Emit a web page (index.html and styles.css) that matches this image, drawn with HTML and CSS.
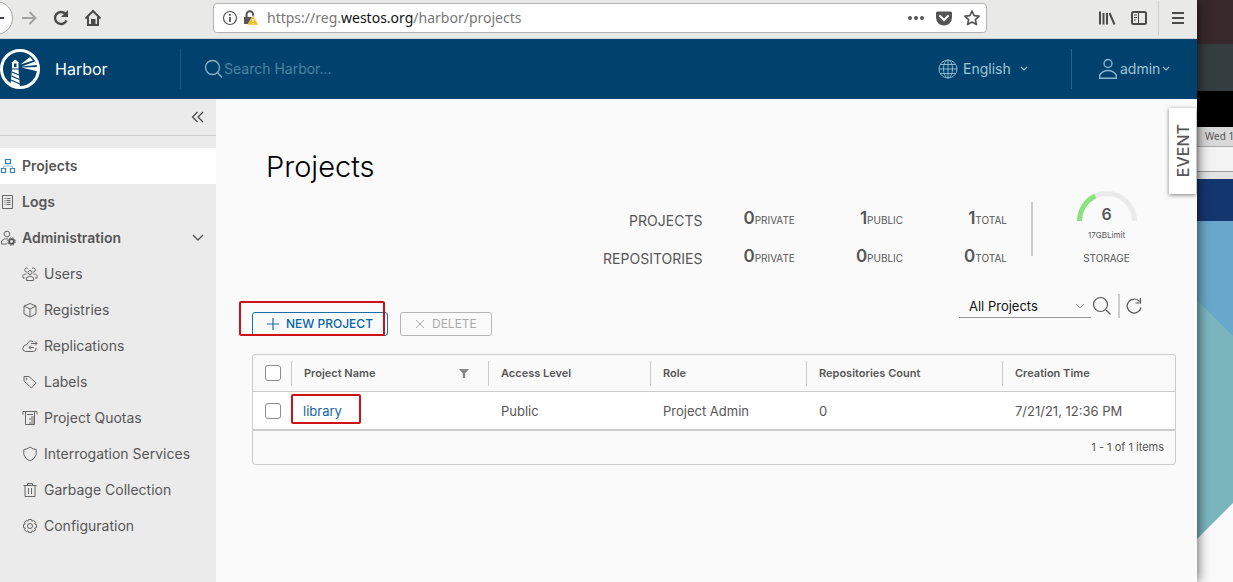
FILE: index.html
```html
<!DOCTYPE html>
<html lang="en">
<head>
<meta charset="utf-8">
<title>Harbor</title>
<link rel="stylesheet" href="styles.css">
</head>
<body>
<div class="browser">
  <div class="chrome">
    <button class="back" aria-label="Back"><svg width="20" height="34" viewBox="0 0 20 34"><circle cx="-4" cy="17" r="16.5" fill="#fcfcfc" stroke="#a5a5a4"/><path d="M0 17h4" stroke="#444" stroke-width="2"/></svg></button>
    <div class="nav">
      <button aria-label="Forward"><svg width="18" height="18" viewBox="0 0 18 18" fill="none" stroke="#a3a3a2" stroke-width="2"><path d="M2 9h14M9.500 3l6 6-6 6"/></svg></button>
      <button aria-label="Reload"><svg width="18" height="18" viewBox="0 0 18 18" fill="none" stroke="#4a4a4a" stroke-width="2.400"><path d="M14.500 11.500A6 6 0 1 1 13.500 5"/><path d="M16 1v7H9z" fill="#4a4a4a" stroke="none"/></svg></button>
      <button aria-label="Home"><svg width="18" height="18" viewBox="0 0 18 18" fill="none" stroke="#4a4a4a" stroke-width="2"><path d="M1.500 9.500L9 2l7.500 7.500M4 8v8h10V8"/><path d="M8 16v-5h2.500v5" fill="#4a4a4a"/></svg></button>
    </div>
    <div class="address">
      <svg width="16" height="16" viewBox="0 0 16 16" fill="none" stroke="#555"><circle cx="8" cy="8" r="6.500" stroke-width="1.200"/><path d="M8 7v5M8 4v1.700" stroke-width="1.800"/></svg>
      <svg class="lock" width="18" height="18" viewBox="0 0 18 18"><path d="M4.500 9V5.500a3.300 3.300 0 0 1 6.600 0V9" fill="none" stroke="#555" stroke-width="2"/><path d="M2 8h10v7H2z" fill="#555"/><path d="M11 6.500l5.500 9.500H5.500z" fill="#fbb717" stroke="#fff" stroke-width=".5"/><path d="M11 10v3M11 14v1" stroke="#fff" stroke-width="1.300"/></svg>
      <div class="url">https://reg.<b>westos.org</b>/harbor/projects</div>
      <button aria-label="Page actions"><svg width="18" height="18" viewBox="0 0 18 18" fill="#555"><circle cx="3" cy="9" r="2"/><circle cx="9" cy="9" r="2"/><circle cx="15" cy="9" r="2"/></svg></button>
      <button aria-label="Pocket"><svg width="18" height="18" viewBox="0 0 18 18"><path d="M2.500 2.500h13q1.500 0 1.500 1.500v4.500a8 8 0 0 1-16 0V4q0-1.500 1.500-1.500z" fill="#555"/><path d="M5 7l4 4 4-4" fill="none" stroke="#fff" stroke-width="2" stroke-linecap="round"/></svg></button>
      <button aria-label="Bookmark"><svg width="18" height="18" viewBox="0 0 18 18" fill="none" stroke="#555" stroke-width="1.700" stroke-linejoin="round"><path d="M9 2l2.100 4.600 5 .6-3.700 3.400 1 5L9 13.100l-4.400 2.500 1-5L1.900 7.200l5-.6z"/></svg></button>
    </div>
    <div class="tools">
      <button aria-label="Library"><svg width="18" height="18" viewBox="0 0 18 18" fill="none" stroke="#4a4a4a" stroke-width="2"><path d="M2 2.500v13M5.500 4v11.500M9 4v11.500M11.500 4l5 11.500"/></svg></button>
      <button aria-label="Sidebars"><svg width="18" height="18" viewBox="0 0 18 18" fill="none" stroke="#4a4a4a"><rect x="2" y="3" width="14" height="12" rx="1.500" stroke-width="2"/><path d="M8.500 3v12M4 6h3M4 8.500h3M4 11h2"/></svg></button>
      <button class="burger" aria-label="Menu"><svg width="18" height="18" viewBox="0 0 18 18" stroke="#4a4a4a" stroke-width="2"><path d="M3 4h12M3 9h12M3 14h12"/></svg></button>
    </div>
  </div>

  <header class="header">
    <a class="brand" href="#">
      <svg width="40" height="40" viewBox="0 0 40 40"><circle cx="20" cy="20" r="18.500" fill="none" stroke="#fff" stroke-width="3"/><path d="M15.300 10.500l4 3.500h-.8v5.500H12V14h-.8zM12 20.500h6.500l1.500 18-9.500-3zM20.500 15.500L30 8l3 3.500zM21.500 17.500l13.500-5 2 3.500zM21.500 18.500L38 18v4.500z" fill="#fff"/><path d="M14 14.500h2.500v3.500H14z" fill="#00426d"/><path d="M12 23l7 3M11.500 27l8 3.500M11 31l9 4" fill="none" stroke="#00426d" stroke-width="1.300"/></svg>
      <span>Harbor</span>
    </a>
    <div class="search">
      <svg width="20" height="20" viewBox="0 0 20 20" fill="none" stroke="#8fb3cb" stroke-width="1.300"><circle cx="8.500" cy="8.500" r="7"/><path d="M13.500 13.500l4.500 5"/></svg>
      <input type="text" placeholder="Search Harbor..." aria-label="Search Harbor">
    </div>
    <button class="lang">
      <svg width="20" height="20" viewBox="0 0 20 20" fill="none" stroke="#8bb5cc"><circle cx="10" cy="10" r="9"/><ellipse cx="10" cy="10" rx="4.500" ry="9"/><path d="M10 1v18M1 10h18M2.500 5.500h15M2.500 14.500h15"/></svg>
      <span>English</span>
      <svg width="8" height="6" viewBox="0 0 8 6" fill="none" stroke="#9cc0d4" stroke-width="1.200"><path d="M1 1l3 3 3-3"/></svg>
    </button>
    <button class="user">
      <svg width="20" height="22" viewBox="0 0 20 22" fill="none" stroke="#8bb5cc" stroke-width="1.400"><circle cx="10" cy="5.500" r="4"/><path d="M1.700 20.300V17q3-4.500 8.300-4.500t8.300 4.500v3.300z"/></svg>
      <span>admin</span>
      <svg width="8" height="6" viewBox="0 0 8 6" fill="none" stroke="#9cc0d4" stroke-width="1.200"><path d="M1 1l3 3 3-3"/></svg>
    </button>
  </header>

  <div class="body">
    <nav class="sidebar">
      <button class="collapse" aria-label="Collapse"><svg width="14" height="12" viewBox="0 0 14 12" fill="none" stroke="#444" stroke-width="1.200"><path d="M6.500 1l-5 5 5 5M12 1L7 6l5 5"/></svg></button>
      <a class="item top active" href="#"><svg width="16" height="16" viewBox="0 0 16 16" fill="none" stroke="#2f7fb8" stroke-width="1.200"><path d="M5.500 1.500h5v4h-5zM1.500 10.500h4v4h-4zM10.500 10.500h4v4h-4z"/><path d="M8 5.500V8M3.500 10.500V8h9v2.500" stroke="#9cc0dc" stroke-width="1"/></svg>Projects</a>
      <a class="item top" href="#"><svg width="16" height="16" viewBox="0 0 16 16" fill="none" stroke="#666"><path d="M2.500 1.500h10v13h-10zM4.500 4.500h1M6.500 4.500h4M4.500 6.500h1M6.500 6.500h4M4.500 8.500h1M6.500 8.500h4M4.500 10.500h1M6.500 10.500h4"/></svg>Logs</a>
      <a class="item top" href="#"><svg width="16" height="16" viewBox="0 0 16 16" fill="none" stroke="#666"><circle cx="7" cy="4" r="2.800"/><path d="M7 14H1.500v-3Q4 8 8 8.700"/><circle cx="11.500" cy="11.500" r="2.300" stroke="#555" stroke-width="1.800"/><circle cx="11.500" cy="11.500" r="3.800" stroke="#555" stroke-dasharray="1.600 1.400"/></svg>Administration<svg class="open" width="12" height="8" viewBox="0 0 12 8" fill="none" stroke="#555" stroke-width="1.400"><path d="M1 1l5 5 5-5"/></svg></a>
      <a class="item sub" href="#"><svg width="16" height="16" viewBox="0 0 16 16" fill="none" stroke="#666"><circle cx="8" cy="6.500" r="2"/><path d="M4.500 14.500v-3q3.500-3 7 0v3zM5 6a2 2 0 1 1 1-3.500M11 6a2 2 0 1 0-1-3.500M4.500 8Q2 7.500 1 9.500v2.500h2M11.500 8q2.500-.5 3.500 1.500v2.500h-2"/></svg>Users</a>
      <a class="item sub" href="#"><svg width="16" height="16" viewBox="0 0 16 16" fill="none" stroke="#666"><path d="M8 1.500l6 2.500v8l-6 3-6-3V4zM2 4l6 3 6-3M8 7v8"/></svg>Registries</a>
      <a class="item sub" href="#"><svg width="16" height="16" viewBox="0 0 16 16" fill="none" stroke="#666"><path d="M11 3.500Q7 1.500 5 6.500 1 7 .8 10.500q.2 2.500 3 3h8q2.500-.5 2.200-3.500M9 5.500h6M13 3.500l2 2-2 2M12 9.500H7M9 7.500l-2 2 2 2"/></svg>Replications</a>
      <a class="item sub" href="#"><svg width="16" height="16" viewBox="0 0 16 16" fill="none" stroke="#666"><path d="M2 2.500h5l7 6.500-4.500 5L2 7z" stroke-linejoin="round"/><circle cx="4.500" cy="5" r=".6"/></svg>Labels</a>
      <a class="item sub" href="#"><svg width="16" height="16" viewBox="0 0 16 16" fill="none" stroke="#666"><path d="M1 4.500v-3h14v3M3.500 2v12.500h9V2M5 4.500h6M9 7h3M7 9h5M9 11h3M7 13h5"/></svg>Project Quotas</a>
      <a class="item sub" href="#"><svg width="16" height="16" viewBox="0 0 16 16" fill="none" stroke="#666"><path d="M8 1q3 2.500 6.200 2.500v5Q13 13 8 15 3 13 1.800 8.500v-5Q5 3.500 8 1z"/></svg>Interrogation Services</a>
      <a class="item sub" href="#"><svg width="16" height="16" viewBox="0 0 16 16" fill="none" stroke="#666"><path d="M1.500 3.500h13M5.500 3V1.500h5V3M3 3.500v11h10v-11M6.500 6v6M9.500 6v6"/></svg>Garbage Collection</a>
      <a class="item sub" href="#"><svg width="16" height="16" viewBox="0 0 16 16" fill="none" stroke="#666"><circle cx="8" cy="8" r="2.500"/><path d="M6.500 1.500h3l.4 1.800 1.700-1 2 2-1 1.700 1.900.5v3l-1.900.5 1 1.700-2 2-1.700-1-.4 1.800h-3l-.5-1.800-1.600 1-2-2 1-1.700-1.900-.5v-3l1.900-.5-1-1.700 2-2 1.600 1z"/></svg>Configuration</a>
    </nav>

    <main class="main">
      <button class="event"><span>EVENT</span></button>
      <h1>Projects</h1>
      <section class="stats">
        <div class="counts">
          <div class="kind">PROJECTS</div>
          <div class="count"><b>0</b>PRIVATE</div><div class="count"><b>1</b>PUBLIC</div><div class="count"><b>1</b>TOTAL</div>
          <div class="kind">REPOSITORIES</div>
          <div class="count"><b>0</b>PRIVATE</div><div class="count"><b>0</b>PUBLIC</div><div class="count"><b>0</b>TOTAL</div>
        </div>
        <div class="rule"></div>
        <div class="storage">
          <div class="gauge">
            <svg width="60" height="30" viewBox="0 0 60 30" fill="none" stroke-width="5"><path d="M2.500 30a27.500 27.500 0 0 1 55 0" stroke="#ebebeb"/><path d="M2.500 30A27.500 27.500 0 0 1 18.300 5.100" stroke="#8ae37c"/></svg>
            <b>6</b>
          </div>
          <div class="limit">17GBLimit</div>
          <div class="name">STORAGE</div>
        </div>
      </section>

      <div class="actions">
        <button class="btn primary"><svg width="12" height="12" viewBox="0 0 12 12" stroke="#1a6fa8" stroke-width="1.200"><path d="M6 0v12M0 6h12"/></svg>NEW PROJECT</button>
        <button class="btn" disabled><svg width="10" height="10" viewBox="0 0 10 10" stroke="#aaa"><path d="M1 1l8 8M9 1L1 9"/></svg>DELETE</button>
        <div class="filters">
          <div class="pick">
            <select aria-label="Project filter"><option>All Projects</option></select>
            <svg width="10" height="6" viewBox="0 0 10 6" fill="none" stroke="#999"><path d="M1 1l4 4 4-4"/></svg>
          </div>
          <button aria-label="Search"><svg width="20" height="20" viewBox="0 0 20 20" fill="none" stroke="#565656" stroke-width="1.200"><circle cx="8.500" cy="8.500" r="7"/><path d="M14 14l4.500 4.500"/></svg></button>
          <button class="refresh" aria-label="Refresh"><svg width="18" height="18" viewBox="0 0 18 18" fill="none" stroke="#565656" stroke-width="1.200"><path d="M16 10.500A7 7 0 1 1 14.500 4.500M15.500 1v5h-5"/></svg></button>
        </div>
        <div class="mark mark-new"></div>
      </div>

      <div class="grid">
        <table>
          <colgroup><col class="c-check"><col class="c-name"><col class="c-access"><col class="c-role"><col class="c-count"><col></colgroup>
          <thead><tr>
            <th><input type="checkbox" aria-label="Select all"></th>
            <th><div>Project Name<svg width="10" height="9" viewBox="0 0 10 9" fill="#888"><path d="M0 0h10L6.200 4.500V9H3.800V4.500z"/></svg></div></th>
            <th><div>Access Level</div></th><th><div>Role</div></th><th><div>Repositories Count</div></th><th><div>Creation Time</div></th>
          </tr></thead>
          <tbody><tr>
            <td><input type="checkbox" aria-label="Select library"></td>
            <td class="lib"><a href="#">library</a><div class="mark mark-lib"></div></td>
            <td>Public</td><td>Project Admin</td><td>0</td><td>7/21/21, 12:36 PM</td>
          </tr></tbody>
        </table>
        <footer>1 - 1 of 1 items</footer>
      </div>
    </main>
  </div>
</div>

<aside class="desktop">
  <div class="d-wall"></div><div class="d-slate"></div><div class="d-black"></div>
  <div class="d-panel">Wed 1</div><div class="d-tab"></div><div class="d-line"></div>
  <div class="d-navy"></div>
  <svg class="d-art" viewBox="0 0 36 361" preserveAspectRatio="none"><path d="M0 0h36v361H0z" fill="#fafafa"/><path d="M0 0h36v282L0 318z" fill="#7ab5bd"/><path d="M0 0h36v115L0 79z" fill="#69a8ca"/></svg>
</aside>
</body>
</html>
```

FILE: styles.css
```css
* { box-sizing: border-box; }
body {
  margin: 0;
  min-height: 100vh;
  display: flex;
  font: 14px/24px Inter, "Liberation Sans", sans-serif;
  color: #565656;
  background: #fafafa;
}
button { border: 0; padding: 0; background: none; font: inherit; color: inherit; display: flex; align-items: center; }
a { color: inherit; text-decoration: none; }
svg { display: block; flex: none; }

.browser { flex: 1; min-width: 0; display: flex; flex-direction: column; position: relative; z-index: 1; box-shadow: 0 0 12px rgba(0, 0, 0, .7); background: #fafafa; }

.chrome { display: flex; align-items: center; height: 39px; padding-bottom: 3px; background: #e9e9e7; border-bottom: 1px solid #c8d4dc; }
.nav { display: flex; gap: 14px; width: 193px; }
.address { flex: 1; display: flex; align-items: center; gap: 10px; max-width: 774px; height: 30px; padding: 0 5px 0 8px; border: 1px solid #b3b3b1; border-radius: 4px; background: #fff; }
.address .lock { margin-left: -6px; }
.url { flex: 1; margin-left: -3px; font-family: "Noto Sans", sans-serif; color: #777; white-space: nowrap; }
.url b { font-weight: 400; color: #111; }
.tools { display: flex; gap: 14px; margin-left: auto; padding-right: 10px; }
.burger { padding-left: 10px; border-left: 1px solid #cfcfcd; height: 34px; margin-left: -4px; }

.header { display: flex; align-items: center; height: 60px; background: #00426d; color: #a3c5d8; }
.brand { display: flex; align-items: center; gap: 15px; width: 181px; height: 40px; border-right: 1px solid #1f5a82; font-size: 16px; color: #fff; }
.search { flex: 1; display: flex; align-items: center; padding-left: 23px; }
.search input { flex: 1; min-width: 0; border: 0; padding: 0; background: none; color: #fff; font: inherit; }
.search input::placeholder { color: #4f83a3; opacity: 1; }
.lang { width: 134px; height: 40px; gap: 5px; border-right: 1px solid #2b648b; }
.lang span { margin-right: 4px; }
.user { width: 125px; padding-left: 26px; gap: 2px; }

.body { flex: 1; display: flex; }
.sidebar { width: 216px; background: #ebebeb; }
.collapse { justify-content: flex-end; width: 100%; height: 37px; padding-right: 11px; margin-bottom: 12px; border-bottom: 1px solid #ccc; }
.item { display: flex; align-items: center; gap: 6px; height: 36px; white-space: nowrap; }
.top { font-weight: 600; }
.sub { padding-left: 22px; }
.active { background: #fff; }
.open { margin-left: auto; margin-right: 12px; }

.main { flex: 1; min-width: 0; position: relative; padding: 50px 21px 0 36px; }
h1 { margin: 0 0 6px 14px; font-size: 29px; line-height: 36px; font-weight: 300; color: #000; }
.event { position: absolute; right: 1px; top: 9px; width: 27px; height: 86px; justify-content: center; background: #fff; box-shadow: 0 1px 4px rgba(0, 0, 0, .5); }
.event span { writing-mode: vertical-rl; transform: rotate(180deg); font-size: 16px; font-weight: 500; }

.stats { display: flex; justify-content: flex-end; padding-right: 34px; height: 76px; }
.counts { display: grid; grid-template-columns: repeat(4, auto); column-gap: 61px; align-content: start; padding-top: 11px; row-gap: 0; }
.kind { margin-right: -20px; padding-top: 3px; height: 38px; line-height: 32px; text-align: right; }
.count { height: 38px; line-height: 32px; font-size: 10px; text-align: right; }
.count b { font-size: 17px; font-weight: 600; }
.rule { width: 2px; height: 54px; margin: 11px 38px 0 24px; background: #ccc; }
.storage { width: 71px; text-align: center; }
.gauge { display: grid; justify-items: center; height: 34px; }
.gauge svg, .gauge b { grid-area: 1 / 1; }
.gauge b { padding-top: 11px; font-size: 16px; font-weight: 600; }
.limit { font-size: 8px; line-height: 20px; }
.name { font-size: 10px; line-height: 26px; }

.actions { position: relative; display: flex; align-items: flex-end; gap: 12px; height: 69px; }
.btn { height: 24px; padding: 0 14px; gap: 7px; border: 1px solid #b5b5b5; border-radius: 3px; font-size: 12px; color: #aaa; }
.primary { border-color: #1a6fa8; color: #0065ab; font-weight: 500; }
.filters { align-self: flex-start; display: flex; align-items: center; gap: 8px; margin: 27px 33px 0 auto; }
.pick { display: grid; align-items: center; width: 132px; height: 24px; margin-right: -7px; border-bottom: 1px solid #999; }
.pick select, .pick svg { grid-area: 1 / 1; }
.pick select { appearance: none; width: 100%; padding: 0 10px; border: 0; background: none; font: inherit; font-size: 13px; color: #111; }
.pick svg { justify-self: end; margin-right: 6px; pointer-events: none; }
.filters .refresh { height: 24px; margin-left: -2px; padding-left: 5px; border-left: 2px solid #ccc; }
.mark { position: absolute; border: 2px solid #cc1216; border-radius: 2px; pointer-events: none; }
.mark-new { left: -13px; top: 34px; width: 146px; height: 35px; }
.mark-lib { left: 0; top: 2px; width: 70px; height: 30px; }

.grid { margin-top: 18px; border: 1px solid #ccc; border-radius: 3px; }
table { width: 100%; table-layout: fixed; border-spacing: 0; font-size: 13px; }
.c-check { width: 38px; }
.c-name { width: 197px; }
.c-access { width: 162px; }
.c-role { width: 156px; }
.c-count { width: 196px; }
th, td { padding: 0; text-align: left; white-space: nowrap; }
th { height: 37px; border-bottom: 1px solid #ccc; font-size: 11px; font-weight: 600; }
th div { display: flex; align-items: center; justify-content: space-between; height: 25px; padding: 0 19px 0 12px; border-left: 1px solid #ccc; }
td { height: 37px; padding-left: 13px; background: #fff; }
.lib { position: relative; color: #0f65a8; }
th:first-child, td:first-child, td.lib { padding-left: 12px; }
input[type="checkbox"] { appearance: none; display: block; width: 16px; height: 16px; margin: 0; border: 1px solid #8c8c8c; border-radius: 3px; background: #fff; }
footer { height: 35px; padding-right: 11px; border-top: 2px solid #ccc; font-size: 11px; line-height: 32px; text-align: right; }

.desktop { width: 36px; display: flex; flex-direction: column; overflow: hidden; }
.d-wall { height: 44px; background: #38282b; }
.d-slate { height: 47px; background: #343d3f; }
.d-black { height: 36px; background: #000; }
.d-panel { height: 19px; padding-left: 8px; background: #d9d9d9; font: 10px/19px "Noto Sans", sans-serif; white-space: nowrap; }
.d-tab { height: 26px; background: #f3f3f3; border-top: 1px solid #aaa; border-bottom: 1px solid #999; }
.d-line { height: 7px; background: #e3e3e3; }
.d-navy { height: 42px; background: #14366f; }
.d-art { flex: 1; width: 100%; min-height: 0; }
```
